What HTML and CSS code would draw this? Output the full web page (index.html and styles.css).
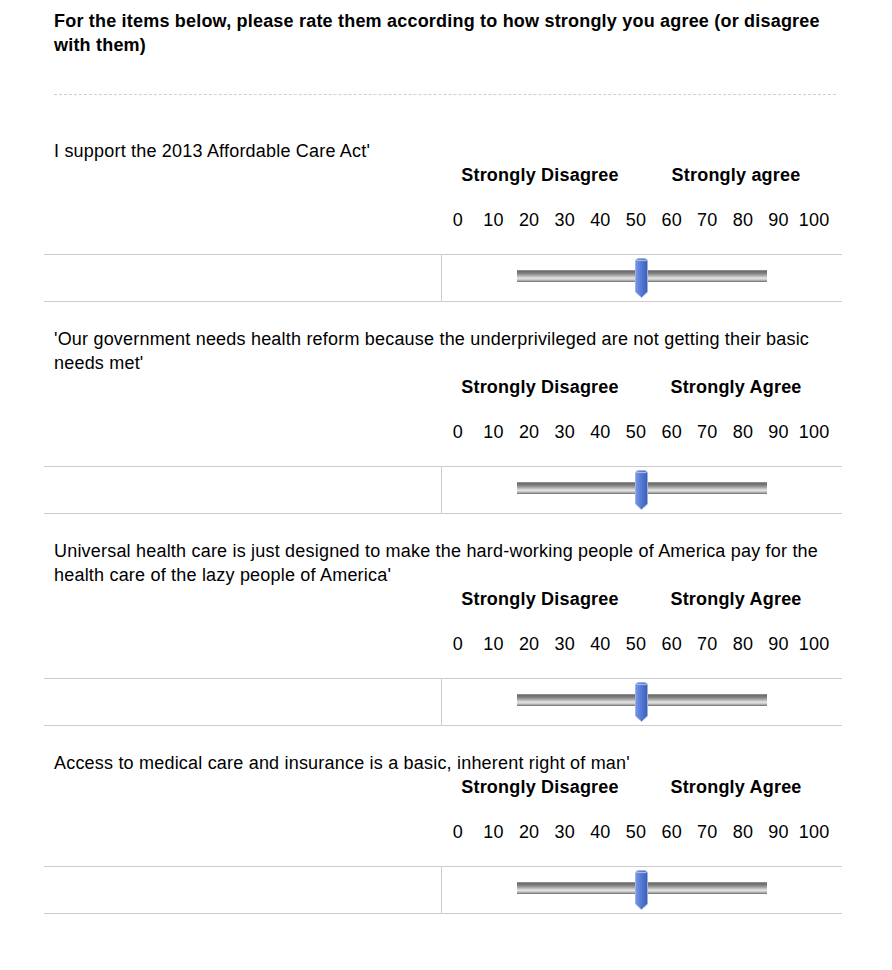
FILE: index.html
```html
<!DOCTYPE html>
<html>
<head>
<meta charset="utf-8">
<link rel="stylesheet" href="styles.css">
</head>
<body>
<svg width="0" height="0" class="defs">
  <defs>
    <linearGradient id="hg" x1="0" y1="0" x2="1" y2="0">
      <stop offset="0" stop-color="#7b98e6"/>
      <stop offset="0.35" stop-color="#5b7fdb"/>
      <stop offset="1" stop-color="#3a5fb8"/>
    </linearGradient>
  </defs>
</svg>
<div class="survey">
  <div class="intro">For the items below, please rate them according to how strongly you agree (or disagree with them)</div>
  <div class="sep"></div>

  <div class="question">
    <div class="q-text">I support the 2013 Affordable Care Act'</div>
    <div class="labels"><span>Strongly Disagree</span><span>Strongly agree</span></div>
    <div class="nums"><span>0</span><span>10</span><span>20</span><span>30</span><span>40</span><span>50</span><span>60</span><span>70</span><span>80</span><span>90</span><span>100</span></div>
    <div class="slider-row">
      <div class="left-cell"></div>
      <div class="right-cell">
        <div class="track">
          <svg class="handle" width="13" height="40" viewBox="0 0 13 40"><path d="M0.5 4 Q0.5 0.5 4 0.5 L9 0.5 Q12.5 0.5 12.5 4 L12.5 34 L6.5 39.5 L0.5 34 Z" fill="url(#hg)" stroke="#9fb2d8" stroke-width="1"/><path d="M2 2.5 L11 2.5" stroke="#a9bdf0" stroke-width="1.2"/></svg>
        </div>
      </div>
    </div>
  </div>

  <div class="question">
    <div class="q-text">'Our government needs health reform because the underprivileged are not getting their basic needs met'</div>
    <div class="labels"><span>Strongly Disagree</span><span>Strongly Agree</span></div>
    <div class="nums"><span>0</span><span>10</span><span>20</span><span>30</span><span>40</span><span>50</span><span>60</span><span>70</span><span>80</span><span>90</span><span>100</span></div>
    <div class="slider-row">
      <div class="left-cell"></div>
      <div class="right-cell">
        <div class="track">
          <svg class="handle" width="13" height="40" viewBox="0 0 13 40"><path d="M0.5 4 Q0.5 0.5 4 0.5 L9 0.5 Q12.5 0.5 12.5 4 L12.5 34 L6.5 39.5 L0.5 34 Z" fill="url(#hg)" stroke="#9fb2d8" stroke-width="1"/><path d="M2 2.5 L11 2.5" stroke="#a9bdf0" stroke-width="1.2"/></svg>
        </div>
      </div>
    </div>
  </div>

  <div class="question">
    <div class="q-text">Universal health care is just designed to make the hard-working people of America pay for the health care of the lazy people of America'</div>
    <div class="labels"><span>Strongly Disagree</span><span>Strongly Agree</span></div>
    <div class="nums"><span>0</span><span>10</span><span>20</span><span>30</span><span>40</span><span>50</span><span>60</span><span>70</span><span>80</span><span>90</span><span>100</span></div>
    <div class="slider-row">
      <div class="left-cell"></div>
      <div class="right-cell">
        <div class="track">
          <svg class="handle" width="13" height="40" viewBox="0 0 13 40"><path d="M0.5 4 Q0.5 0.5 4 0.5 L9 0.5 Q12.5 0.5 12.5 4 L12.5 34 L6.5 39.5 L0.5 34 Z" fill="url(#hg)" stroke="#9fb2d8" stroke-width="1"/><path d="M2 2.5 L11 2.5" stroke="#a9bdf0" stroke-width="1.2"/></svg>
        </div>
      </div>
    </div>
  </div>

  <div class="question">
    <div class="q-text">Access to medical care and insurance is a basic, inherent right of man'</div>
    <div class="labels"><span>Strongly Disagree</span><span>Strongly Agree</span></div>
    <div class="nums"><span>0</span><span>10</span><span>20</span><span>30</span><span>40</span><span>50</span><span>60</span><span>70</span><span>80</span><span>90</span><span>100</span></div>
    <div class="slider-row">
      <div class="left-cell"></div>
      <div class="right-cell">
        <div class="track">
          <svg class="handle" width="13" height="40" viewBox="0 0 13 40"><path d="M0.5 4 Q0.5 0.5 4 0.5 L9 0.5 Q12.5 0.5 12.5 4 L12.5 34 L6.5 39.5 L0.5 34 Z" fill="url(#hg)" stroke="#9fb2d8" stroke-width="1"/><path d="M2 2.5 L11 2.5" stroke="#a9bdf0" stroke-width="1.2"/></svg>
        </div>
      </div>
    </div>
  </div>
</div>
</body>
</html>
```

FILE: styles.css
```css
html, body {
  margin: 0;
  padding: 0;
  background: #fff;
}
body {
  font-family: "Liberation Sans", Arial, sans-serif;
  font-size: 18px;
  line-height: 24px;
  letter-spacing: 0.2px;
  color: #000;
}
.defs {
  position: absolute;
  width: 0;
  height: 0;
}
.survey {
  width: 798px;
  margin-left: 44px;
  padding-top: 9px;
}
.intro {
  font-weight: bold;
  padding: 0 10px;
}
.sep {
  margin: 37px 6px 44px 10px;
  border-top: 1px dashed #cfcfcf;
  height: 0;
}
.question {
  margin-bottom: 25px;
}
.q-text {
  padding: 0 10px;
}
.labels {
  margin-left: 398px;
  width: 392px;
  display: grid;
  grid-template-columns: 1fr 1fr;
  font-weight: bold;
  text-align: center;
}
.nums {
  margin-top: 21px;
  margin-left: 396px;
  width: 392px;
  display: grid;
  grid-template-columns: repeat(11, 1fr);
  text-align: center;
}
.slider-row {
  margin-top: 22px;
  display: flex;
  border-top: 1px solid #cccccc;
  border-bottom: 1px solid #cccccc;
  height: 46px;
}
.left-cell {
  width: 397px;
  border-right: 1px solid #cccccc;
}
.right-cell {
  flex: 1;
  display: flex;
  justify-content: center;
  padding-top: 15px;
}
.track {
  position: relative;
  width: 250px;
  height: 12px;
  background: linear-gradient(to bottom, #9a9a9a 0, #6e6e6e 12%, #7a7a7a 25%, #a8a8a8 45%, #d6d6d6 62%, #e2e2e2 72%, #b8b8b8 85%, #6a6a6a 100%);
}
.handle {
  position: absolute;
  left: 118px;
  top: -12px;
  display: block;
}
```
